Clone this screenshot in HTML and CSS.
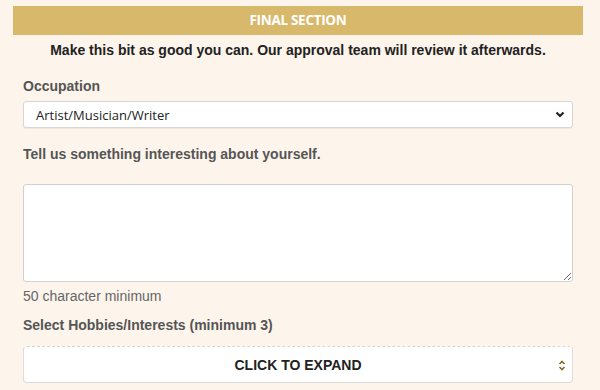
FILE: index.html
```html
<!DOCTYPE html>
<html>
<head>
<meta charset="utf-8">
<link rel="stylesheet" href="styles.css">
</head>
<body>
<div class="page">
  <div class="bar">FINAL SECTION</div>
  <p class="intro">Make this bit as good you can. Our approval team will review it afterwards.</p>
  <div class="form">
    <label class="label lbl-occ">Occupation</label>
    <div class="select">
      <span class="opt">Artist/Musician/Writer</span>
      <svg class="chev" width="10" height="7" viewBox="0 0 10 7"><polyline points="1.5,1.5 5,5 8.5,1.5" fill="none" stroke="#222" stroke-width="2.2"/></svg>
    </div>
    <label class="label lbl-tell">Tell us something interesting about yourself.</label>
    <textarea class="area"></textarea>
    <div class="hint">50 character minimum</div>
    <label class="label lbl-hob">Select Hobbies/Interests (minimum 3)</label>
    <div class="expand">
      <span>CLICK TO EXPAND</span>
      <svg class="updown" width="8" height="11" viewBox="0 0 8 11"><polyline points="1.5,4 4,1.5 6.5,4" fill="none" stroke="#8a6a2a" stroke-width="1.6"/><polyline points="1.5,7 4,9.5 6.5,7" fill="none" stroke="#8a6a2a" stroke-width="1.6"/></svg>
    </div>
  </div>
</div>
</body>
</html>
```
FILE: styles.css
```css
html, body {
  margin: 0;
  padding: 0;
  background: #fdf5ec;
}
body {
  font-family: "Liberation Sans", Arial, sans-serif;
}
.page {
  width: 570px;
  margin-left: 13px;
  padding-top: 6px;
}
.bar {
  background: #d8b86b;
  color: #fff;
  font-family: "Open Sans", sans-serif;
  font-weight: 700;
  font-size: 13.5px;
  letter-spacing: -0.3px;
  height: 29px;
  line-height: 29px;
  text-align: center;
}
.intro {
  margin: 7px 0 0;
  font-size: 14px;
  font-weight: 700;
  line-height: 16px;
  color: #222;
  text-align: center;
}
.form {
  padding: 0 10px;
  display: flex;
  flex-direction: column;
}
.label {
  display: block;
  font-size: 14px;
  font-weight: 700;
  line-height: 16px;
  color: #555;
}
.lbl-occ { margin-top: 20px; }
.lbl-tell { margin-top: 18px; }
.lbl-hob { margin-top: 13px; }
.select {
  margin-top: 7px;
  height: 27px;
  box-sizing: border-box;
  background: #fff;
  border: 1px solid #d6d6d6;
  border-radius: 3px;
  box-shadow: 0 1px 1px rgba(0,0,0,0.05);
  display: flex;
  align-items: center;
  padding: 0 7px 0 0;
  font-family: "Open Sans", sans-serif;
  font-size: 13px;
  color: #222;
}
.opt {
  flex: 1;
  margin-left: 12px;
}
.area {
  margin: 22px 0 0;
  height: 98px;
  box-sizing: border-box;
  background: #fff;
  border: 1px solid #d0d0d0;
  border-radius: 3px;
  resize: vertical;
  display: block;
  width: 100%;
}
.hint {
  margin-top: 6px;
  font-size: 14px;
  line-height: 16px;
  color: #666;
}
.expand {
  margin-top: 13px;
  height: 37px;
  box-sizing: border-box;
  background: #fff;
  border: 1px solid #dcdcdc;
  border-top: 1px dashed #d6d6d6;
  border-radius: 4px;
  position: relative;
  display: flex;
  align-items: center;
  justify-content: center;
  font-size: 14px;
  font-weight: 700;
  color: #222;
}
.updown {
  position: absolute;
  right: 6px;
  top: 13px;
}
```
